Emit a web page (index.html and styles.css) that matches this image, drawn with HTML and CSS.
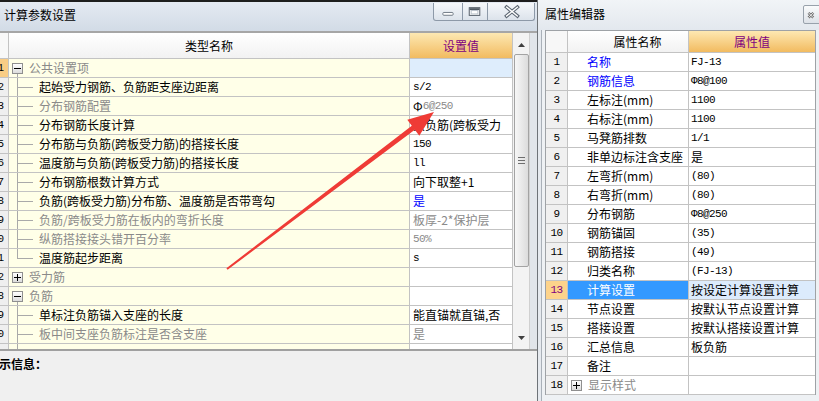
FILE: index.html
```html
<!DOCTYPE html>
<html lang="zh">
<head>
<meta charset="utf-8">
<title>计算参数设置</title>
<link rel="stylesheet" href="styles.css">
</head>
<body>
<div class="screen">
  <section class="lwin">
    <div class="strip"></div>
    <header class="ltitle">
      <span class="ttext">计算参数设置</span>
      <div class="wbtns">
        <span class="wb wb-min"><svg width="30" height="18" viewBox="0 0 30 18"><rect x="9.5" y="9.5" width="11" height="3" rx="1" fill="#fff" stroke="#6a7480"/></svg></span>
        <span class="wb wb-max"><svg width="25" height="18" viewBox="0 0 25 18"><rect x="6.5" y="4.5" width="11" height="8" fill="#fff" stroke="#4f5863"/><rect x="7" y="5" width="10" height="2" fill="#4f5863"/><rect x="8.5" y="7.5" width="7" height="3.5" fill="none" stroke="#b8c0c9"/></svg></span>
        <span class="wb wb-close"><svg width="47" height="18" viewBox="0 0 47 18"><path d="M19 4 L30 13 M30 4 L19 13" stroke="#5c6672" stroke-width="3.6" stroke-linecap="square"/><path d="M19 4 L30 13 M30 4 L19 13" stroke="#fff" stroke-width="1.4" stroke-linecap="square"/></svg></span>
      </div>
    </header>
    <div class="lsep"></div>
    <div class="lbody">
      <div class="ltable">
        <div class="lrow lhead">
          <div class="rn"></div>
          <div class="nm hc">类型名称</div>
          <div class="val hv">设置值</div>
        </div>
        <div class="lrow sel">
          <div class="rn">1</div>
          <div class="nm open"><span class="tg minus"></span><span class="dim">公共设置项</span></div>
          <div class="val vsel"></div>
        </div>
        <div class="lrow">
          <div class="rn">2</div>
          <div class="nm"><span class="br"></span>起始受力钢筋、负筋距支座边距离</div>
          <div class="val m">s/2</div>
        </div>
        <div class="lrow">
          <div class="rn">3</div>
          <div class="nm dim"><span class="br"></span>分布钢筋配置</div>
          <div class="val"><span>Φ</span><span class="m dim">6@250</span></div>
        </div>
        <div class="lrow">
          <div class="rn">4</div>
          <div class="nm"><span class="br"></span>分布钢筋长度计算</div>
          <div class="val">按负筋(跨板受力</div>
        </div>
        <div class="lrow">
          <div class="rn">5</div>
          <div class="nm"><span class="br"></span>分布筋与负筋(跨板受力筋)的搭接长度</div>
          <div class="val m">150</div>
        </div>
        <div class="lrow">
          <div class="rn">6</div>
          <div class="nm"><span class="br"></span>温度筋与负筋(跨板受力筋)的搭接长度</div>
          <div class="val m">ll</div>
        </div>
        <div class="lrow">
          <div class="rn">7</div>
          <div class="nm"><span class="br"></span>分布钢筋根数计算方式</div>
          <div class="val">向下取整+1</div>
        </div>
        <div class="lrow">
          <div class="rn">8</div>
          <div class="nm"><span class="br"></span>负筋(跨板受力筋)分布筋、温度筋是否带弯勾</div>
          <div class="val blue">是</div>
        </div>
        <div class="lrow">
          <div class="rn">9</div>
          <div class="nm dim"><span class="br"></span>负筋/跨板受力筋在板内的弯折长度</div>
          <div class="val dim">板厚-2*保护层</div>
        </div>
        <div class="lrow">
          <div class="rn">10</div>
          <div class="nm dim"><span class="br"></span>纵筋搭接接头错开百分率</div>
          <div class="val dim m">50%</div>
        </div>
        <div class="lrow">
          <div class="rn">11</div>
          <div class="nm"><span class="br last"></span>温度筋起步距离</div>
          <div class="val m">s</div>
        </div>
        <div class="lrow">
          <div class="rn">12</div>
          <div class="nm"><span class="tg plus"></span><span class="dim">受力筋</span></div>
          <div class="val"></div>
        </div>
        <div class="lrow">
          <div class="rn">18</div>
          <div class="nm open"><span class="tg minus"></span><span class="dim">负筋</span></div>
          <div class="val"></div>
        </div>
        <div class="lrow">
          <div class="rn">19</div>
          <div class="nm"><span class="br"></span>单标注负筋锚入支座的长度</div>
          <div class="val">能直锚就直锚,否</div>
        </div>
        <div class="lrow">
          <div class="rn">20</div>
          <div class="nm dim"><span class="br"></span>板中间支座负筋标注是否含支座</div>
          <div class="val dim">是</div>
        </div>
        <div class="lrow">
          <div class="rn"></div>
          <div class="nm"><span class="br"></span></div>
          <div class="val"></div>
        </div>
      </div>
      <div class="vscroll">
        <div class="sb-btn sb-up"><svg width="7" height="4" viewBox="0 0 7 4"><path d="M0 4 L3.5 0 L7 4 Z" fill="#404040"/></svg></div>
        <div class="sb-thumb"><span class="grip"></span></div>
        <div class="sb-space"></div>
        <div class="sb-btn sb-down"><svg width="7" height="4" viewBox="0 0 7 4"><path d="M0 0 L3.5 4 L7 0 Z" fill="#404040"/></svg></div>
      </div>
      <div class="lframe"></div>
    </div>
    <div class="prompt">提示信息：</div>
  </section>

  <section class="rwin">
    <header class="rtitle">
      <span class="ttext">属性编辑器</span>
      <span class="rclose"><svg width="18" height="19" viewBox="0 0 18 19"><path d="M5 6.5 L10.5 12 M10.5 6.5 L5 12" stroke="#6a6a6a" stroke-width="2.8"/><path d="M5 6.5 L10.5 12 M10.5 6.5 L5 12" stroke="#fff" stroke-width="1"/></svg></span>
    </header>
    <div class="rbody">
      <div class="rtable">
        <div class="rrow rhead">
          <div class="rn2"></div>
          <div class="nm2 hc">属性名称</div>
          <div class="val2 hv">属性值</div>
        </div>
        <div class="rrow"><div class="rn2 m">1</div><div class="nm2 blue">名称</div><div class="val2 m">FJ-13</div></div>
        <div class="rrow"><div class="rn2 m">2</div><div class="nm2 blue">钢筋信息</div><div class="val2 m">Φ8@100</div></div>
        <div class="rrow"><div class="rn2 m">3</div><div class="nm2">左标注(mm)</div><div class="val2 m">1100</div></div>
        <div class="rrow"><div class="rn2 m">4</div><div class="nm2">右标注(mm)</div><div class="val2 m">1100</div></div>
        <div class="rrow"><div class="rn2 m">5</div><div class="nm2">马凳筋排数</div><div class="val2 m">1/1</div></div>
        <div class="rrow"><div class="rn2 m">6</div><div class="nm2">非单边标注含支座</div><div class="val2">是</div></div>
        <div class="rrow"><div class="rn2 m">7</div><div class="nm2">左弯折(mm)</div><div class="val2 m">(80)</div></div>
        <div class="rrow"><div class="rn2 m">8</div><div class="nm2">右弯折(mm)</div><div class="val2 m">(80)</div></div>
        <div class="rrow"><div class="rn2 m">9</div><div class="nm2">分布钢筋</div><div class="val2 m">Φ8@250</div></div>
        <div class="rrow"><div class="rn2 m">10</div><div class="nm2">钢筋锚固</div><div class="val2 m">(35)</div></div>
        <div class="rrow"><div class="rn2 m">11</div><div class="nm2">钢筋搭接</div><div class="val2 m">(49)</div></div>
        <div class="rrow"><div class="rn2 m">12</div><div class="nm2">归类名称</div><div class="val2 m">(FJ-13)</div></div>
        <div class="rrow rsel"><div class="rn2 m">13</div><div class="nm2">计算设置</div><div class="val2">按设定计算设置计算</div></div>
        <div class="rrow"><div class="rn2 m">14</div><div class="nm2">节点设置</div><div class="val2">按默认节点设置计算</div></div>
        <div class="rrow"><div class="rn2 m">15</div><div class="nm2">搭接设置</div><div class="val2">按默认搭接设置计算</div></div>
        <div class="rrow"><div class="rn2 m">16</div><div class="nm2">汇总信息</div><div class="val2">板负筋</div></div>
        <div class="rrow"><div class="rn2 m">17</div><div class="nm2">备注</div><div class="val2"></div></div>
        <div class="rrow"><div class="rn2 m">18</div><div class="nm2 grp"><span class="tg plus"></span><span class="dim">显示样式</span></div><div class="val2"></div></div>
      </div>
    </div>
  </section>
</div>
<svg class="arrow" width="819" height="401" viewBox="0 0 819 401">
  <polygon points="226.4,268.2 411.8,125.7 407.3,119.7 434,112 419.3,135.7 414.8,129.7 227.6,269.8" fill="#ef3b36"/>
</svg>
</body>
</html>
```

FILE: styles.css
```css
* { box-sizing: border-box; margin: 0; padding: 0; }
html, body { width: 819px; height: 401px; overflow: hidden; }
body {
  position: relative;
  background: #f0f0f0;
  font-family: "Noto Sans CJK SC", "Noto Sans", sans-serif;
  font-size: 12px;
  line-height: 1;
  color: #000;
}
.screen { display: flex; height: 401px; }

.m { font-family: "Liberation Mono", "Noto Sans CJK SC", monospace; font-size: 11px; letter-spacing: -0.6px; }
.dim { color: #8a8a8a; }
.blue { color: #0000ff; }

/* ---------- left window ---------- */
.lwin {
  width: 538px; flex: none;
  display: flex; flex-direction: column;
  border-right: 1px solid #6e7378;
  background: #f0f0f0;
}
.strip { height: 2px; background: #1e1e1e; }
.ltitle {
  height: 29px; display: flex; align-items: flex-start;
  background: linear-gradient(#e4eaf2, #d2dbe6);
  padding-right: 2px;
}
.ttext { padding-left: 4px; line-height: 26px; font-size: 12px; }
.wbtns { margin-left: auto; margin-top: 1px; display: flex; }
.wb {
  height: 18px; display: flex;
  border: 1px solid #8d99a8; border-top: none; border-left: none;
  background: linear-gradient(#f6f8fb, #dce3eb);
}
.wb-min { width: 30px; border-left: 1px solid #8d99a8; border-bottom-left-radius: 3px; }
.wb-max { width: 25px; }
.wb-close { width: 47px; border-bottom-right-radius: 3px; }

.lsep { height: 2px; background: #a6a6a6; }
.lbody { height: 316px; display: flex; }
.ltable { width: 513px; flex: none; overflow: hidden; background: #fff; }
.lrow { display: flex; height: 19px; }
.lrow > div {
  border-right: 1px solid #c3c3c3;
  border-bottom: 1px solid #c3c3c3;
  display: flex; align-items: center;
  white-space: nowrap; overflow: hidden; flex: none;
}
.lrow .rn {
  width: 9px; background: #efefef;
  justify-content: flex-end; padding-right: 4px;
  font-family: "Liberation Mono", monospace; font-size: 11px;
}
.lrow .nm { width: 401px; background: #ffffe8; }
.lrow .val { width: 103px; background: #fff; padding-left: 3px; }
.lhead { height: 26px; }
.lhead .rn { background: #f8f8f8; }
.hc { justify-content: center; background: linear-gradient(#ffffff, #f2f2f2) !important; }
.hv { justify-content: center; padding-left: 0 !important; color: #800080; background: linear-gradient(#fde8b2, #f2bb60) !important; }
.sel .rn { background: #f9cd85; }
.vsel { background: #deedfc !important; }

.br {
  width: 22px; height: 100%; margin-left: 8px; flex: none;
  background:
    linear-gradient(#a9a9a9, #a9a9a9) 0 0 / 1px 100% no-repeat,
    linear-gradient(#a9a9a9, #a9a9a9) 0 9px / 16px 1px no-repeat;
}
.br.last {
  background:
    linear-gradient(#a9a9a9, #a9a9a9) 0 0 / 1px 10px no-repeat,
    linear-gradient(#a9a9a9, #a9a9a9) 0 9px / 16px 1px no-repeat;
}
.tg {
  width: 11px; height: 11px; flex: none;
  margin-left: 3px; margin-right: 6px;
  border: 1px solid #8f8f8f;
}
.tg.minus {
  background:
    linear-gradient(#000, #000) center / 7px 1px no-repeat,
    linear-gradient(#ffffff, #dcdcdc);
}
.tg.plus {
  background:
    linear-gradient(#000, #000) center / 7px 1px no-repeat,
    linear-gradient(#000, #000) center / 1px 7px no-repeat,
    linear-gradient(#ffffff, #dcdcdc);
}
.lrow .nm.open {
  background: linear-gradient(#a9a9a9, #a9a9a9) 8px 14px / 1px 10px no-repeat, #ffffe8;
}

.vscroll {
  width: 16px; flex: none; background: #f3f3f3;
  display: flex; flex-direction: column; align-items: center;
}
.sb-btn { height: 21px; width: 16px; display: flex; align-items: center; justify-content: center; flex: none; }
.sb-up { padding-top: 3px; }
.sb-down { height: 20px; padding-bottom: 3px; }
.sb-thumb {
  width: 15px; height: 213px; flex: none;
  border: 1px solid #a3a3a3; border-radius: 2px;
  background: linear-gradient(90deg, #f7f7f7, #dcdcdc);
  display: flex; align-items: center; justify-content: center;
}
.grip {
  width: 7px; height: 7px;
  background: repeating-linear-gradient(#6e6e6e 0 1px, transparent 1px 3px);
}
.sb-space { flex: 1; }
.lframe { flex: 1; background: #e1e5ea; border-left: 1px solid #d0d0d0; }

.prompt {
  flex: 1; border-top: 2px solid #a0a0a0;
  padding-top: 6px; text-indent: -13px;
  font-weight: bold; line-height: 14px;
}

/* ---------- right window ---------- */
.rwin { flex: 1; display: flex; flex-direction: column; background: #eceff3; }
.rtitle {
  height: 30px; flex: none; display: flex; align-items: flex-start;
  background: linear-gradient(#f1f4f7, #e3e8ee);
}
.rtitle .ttext { padding-left: 7px; line-height: 27px; }
.rclose {
  margin-left: auto; margin-right: -2px; margin-top: 5px;
  width: 18px; height: 19px; flex: none; display: flex;
  border: 1px solid #98a1ab; border-radius: 2px;
  background: linear-gradient(#fafbfc, #dde2e8);
}
.rbody {
  flex: 1; display: flex; padding-left: 7px; padding-right: 3px;
  background: linear-gradient(90deg, #e6eaef 0 3px, #a9b0b8 3px 4px, #eef1f4 4px);
}
.rtable {
  width: 271px; flex: none; align-self: flex-start;
  border: 1px solid #9ea2a6; border-bottom: none;
  background: #fff;
}
.rrow { display: flex; height: 19px; }
.rrow > div {
  border-bottom: 1px solid #c3c3c3;
  display: flex; align-items: center;
  white-space: nowrap; overflow: hidden; flex: none;
}
.rhead { height: 22px; }
.rn2 { width: 22px; border-right: 1px solid #c3c3c3; background: #f0f0f0; justify-content: center; }
.nm2 { width: 121px; border-right: 1px solid #c3c3c3; padding-left: 19px; }
.val2 { width: 126px; padding-left: 2px; }
.rhead .rn2 { background: #f7f7f7; }
.nm2.grp { padding-left: 0; }
.rsel .rn2 { background: #fdd38b; color: #800080; }
.rsel .nm2 { background: #3399ff; color: #fff; }
.rsel .val2 { background: #dcebfc; }

.arrow { position: absolute; left: 0; top: 0; pointer-events: none; }
```
